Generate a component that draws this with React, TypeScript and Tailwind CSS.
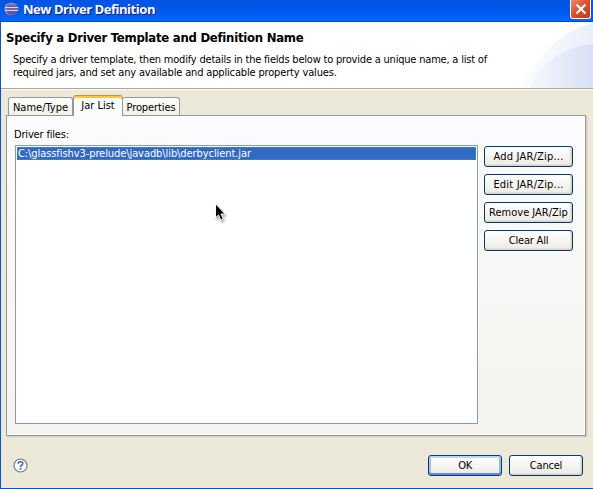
import React from "react";

function EclipseIcon() {
  return (
    <svg className="h-4 w-4 shrink-0" viewBox="0 0 16 16">
      <defs>
        <linearGradient id="orb" x1="0" y1="0" x2="0" y2="1">
          <stop offset="0" stopColor="#9a8fc4" />
          <stop offset="0.45" stopColor="#4a4488" />
          <stop offset="1" stopColor="#6a5fa6" />
        </linearGradient>
      </defs>
      <ellipse cx="6.8" cy="8" rx="6.3" ry="6.2" fill="#b3a3c6" />
      <ellipse cx="8" cy="8" rx="6.3" ry="6.2" fill="url(#orb)" />
      <path d="M1 6.5h13.3M1 9.5h13.3" stroke="#d8d8f4" strokeWidth="1" />
      <path d="M1.5 8h13" stroke="#8c8cc4" strokeWidth="1" />
    </svg>
  );
}

function HelpIcon() {
  return (
    <svg className="h-[15px] w-[15px]" viewBox="0 0 15 15">
      <circle cx="7.5" cy="7.5" r="6.5" fill="#fbfcff" stroke="#64769c" strokeWidth="1.1" />
      <path d="M5.1 5.8C5.1 3.1 9.8 3.1 9.8 5.5C9.8 7.1 7.5 7 7.5 9" fill="none" stroke="#4b5d8b" strokeWidth="1.6" />
      <path d="M6.6 10h1.8v1.6H6.6z" fill="#4b5d8b" />
    </svg>
  );
}

function Cursor() {
  return (
    <svg className="absolute left-[199px] top-[57px] h-[20px] w-[13px] drop-shadow-[1px_2px_1px_rgba(0,0,0,0.35)]" viewBox="0 0 13 20">
      <path d="M.5.8v14l3-2.8 2.3 5.2 2.5-1.1L6 11h4.2z" fill="#000" stroke="#fff" strokeWidth="1" />
    </svg>
  );
}

type ButtonProps = { label: string; track: string; isDefault?: boolean; wide?: string };

function XpButton({ label, track, isDefault = false, wide = "w-[89px]" }: ButtonProps) {
  const ring = isDefault
    ? "shadow-[inset_0_2px_0_#bcd4f6,inset_0_-2px_0_#6982ee,inset_2px_0_0_#a4bff0,inset_-2px_0_0_#9ab4ee]"
    : "shadow-[inset_-1px_-1px_0_#d6d0c5,inset_-2px_-2px_0_#e5e1d8]";
  return (
    <button
      className={`flex h-[21px] shrink-0 items-center justify-center whitespace-nowrap rounded-[3px] border border-[#003c74] bg-linear-to-b from-white via-[#f6f5f0] to-[#eceae3] ${ring} ${wide}`}
    >
      <span className={track}>{label}</span>
    </button>
  );
}

export default function App() {
  return (
    <div className="flex h-[489px] w-[593px] flex-col overflow-hidden border-b border-l border-[#0855dd] bg-[#ece9d8] font-['DejaVu_Sans_Condensed','DejaVu_Sans',sans-serif] text-[11px] leading-[13px] text-black [font-stretch:condensed]">
      <header className="flex h-[22px] shrink-0 items-start justify-between bg-linear-to-b from-[#0054e3] via-[#0058ec] via-45% to-[#0367fb] shadow-[inset_0_-1px_0_#0048c8]">
        <div className="flex items-center gap-[3px] pl-[3px]">
          <EclipseIcon />
          <h1 className="whitespace-nowrap pt-px font-['Open_Sans','Noto_Sans',sans-serif] text-[13px] font-bold leading-4 tracking-[-0.46px] text-white [font-stretch:normal] [text-shadow:1px_1px_0_#0a1883]">New Driver Definition</h1>
        </div>
        <button className="mr-[2px] flex h-[19px] w-[21px] items-end justify-center rounded-b-[3px] border border-t-0 border-white bg-linear-to-br from-[#e9896a] via-[#dc4d28] to-[#c63b0c] pb-[3px]">
          <svg className="h-3 w-3" viewBox="0 0 12 12">
            <path d="M1.5 1.5l9 9M10.5 1.5l-9 9" stroke="white" strokeWidth="2.2" />
          </svg>
        </button>
      </header>

      <section className="relative h-[66px] shrink-0 bg-white">
        <svg className="absolute right-0 top-0 h-[66px] w-[72px]" viewBox="0 0 72 66">
          <defs>
            <linearGradient id="swoosh">
              <stop offset="0" stopColor="#fcfdff" />
              <stop offset="0.4" stopColor="#f6f8fd" />
              <stop offset="1" stopColor="#e9eefa" />
            </linearGradient>
            <linearGradient id="swooshInner">
              <stop offset="0" stopColor="#f5f7fd" />
              <stop offset="1" stopColor="#d8e0f4" />
            </linearGradient>
          </defs>
          <path d="M0 66C10 42 36 9 72 1V66z" fill="url(#swoosh)" />
          <path d="M9 66C18 40 46 24 72 22V66z" fill="url(#swooshInner)" />
        </svg>
        <div className="relative whitespace-nowrap pl-[5px] pt-2">
          <h2 className="text-[13px] font-bold leading-[15px] tracking-[-0.26px]">Specify a Driver Template and Definition Name</h2>
          <p className="pl-[7px] pt-[8px] leading-[13px]">
            <span className="block tracking-[-0.2px]">Specify a driver template, then modify details in the fields below to provide a unique name, a list of</span>
            <span className="block tracking-[-0.16px]">required jars, and set any available and applicable property values.</span>
          </p>
        </div>
      </section>
      <div className="h-[2px] shrink-0 border-b border-white bg-[#aca899]" />

      <main className="flex h-[346px] shrink-0 flex-col pl-[5px] pr-[6px] pt-[5px]">
        <nav className="relative z-10 -mb-px flex h-[21px] shrink-0 items-end whitespace-nowrap pl-[2px]">
          <div className="mb-px flex h-[18px] w-[65px] justify-center rounded-t-[3px] border border-b-0 border-[#919b9c] bg-linear-to-b from-white to-[#f0efe8] pt-[3px]">
            <span>Name/Type</span>
          </div>
          <div className="flex h-[21px] w-[50px] justify-center rounded-t-[3px] border-x border-t border-x-[#919b9c] border-t-[#e68b2c] bg-[#fcfcfe] pt-[3px] shadow-[inset_0_2px_0_#ffc73c]">
            <span>Jar List</span>
          </div>
          <div className="mb-px flex h-[18px] w-[57px] justify-center rounded-t-[3px] border border-b-0 border-l-0 border-[#919b9c] bg-linear-to-b from-white to-[#f0efe8] pt-[3px]">
            <span className="tracking-[-0.1px]">Properties</span>
          </div>
        </nav>
        <div className="h-[321px] w-[580px] shrink-0 border border-[#919b9c] bg-linear-to-b from-[#fcfcfe] to-[#f4f3ee] pl-2 pt-[12px] shadow-[1px_1px_0_#d0cebf,2px_2px_0_#e2dfcf,inset_-1px_-1px_0_#fff]">
          <div className="-ml-px h-[17px] pl-0"><span className="tracking-[-0.17px]">Driver files:</span></div>
          <div className="flex gap-[6px]">
            <div className="relative h-[279px] w-[463px] border border-[#7f9db9] bg-white p-px">
              <div className="h-[13px] whitespace-nowrap bg-[#316ac5] pl-px leading-[14px] text-white outline-1 -outline-offset-1 outline-dotted outline-[#5d86c0]">
                <span className="tracking-[-0.08px]">C:\glassfishv3-prelude\javadb\lib\derbyclient.jar</span>
              </div>
              <Cursor />
            </div>
            <div className="flex flex-col gap-[7px] pt-px">
              <XpButton label="Add JAR/Zip..." track="tracking-[0.2px]" />
              <XpButton label="Edit JAR/Zip..." track="tracking-[0.2px]" />
              <XpButton label="Remove JAR/Zip" track="" />
              <XpButton label="Clear All" track="tracking-[-0.2px]" />
            </div>
          </div>
        </div>
      </main>

      <footer className="flex items-center justify-between pl-3 pr-[10px] pt-[19px]">
        <HelpIcon />
        <div className="flex gap-[7px]">
          <XpButton label="OK" track="tracking-[-0.3px]" isDefault wide="w-[74px]" />
          <XpButton label="Cancel" track="tracking-[-0.2px]" wide="w-[74px]" />
        </div>
      </footer>
    </div>
  );
}
